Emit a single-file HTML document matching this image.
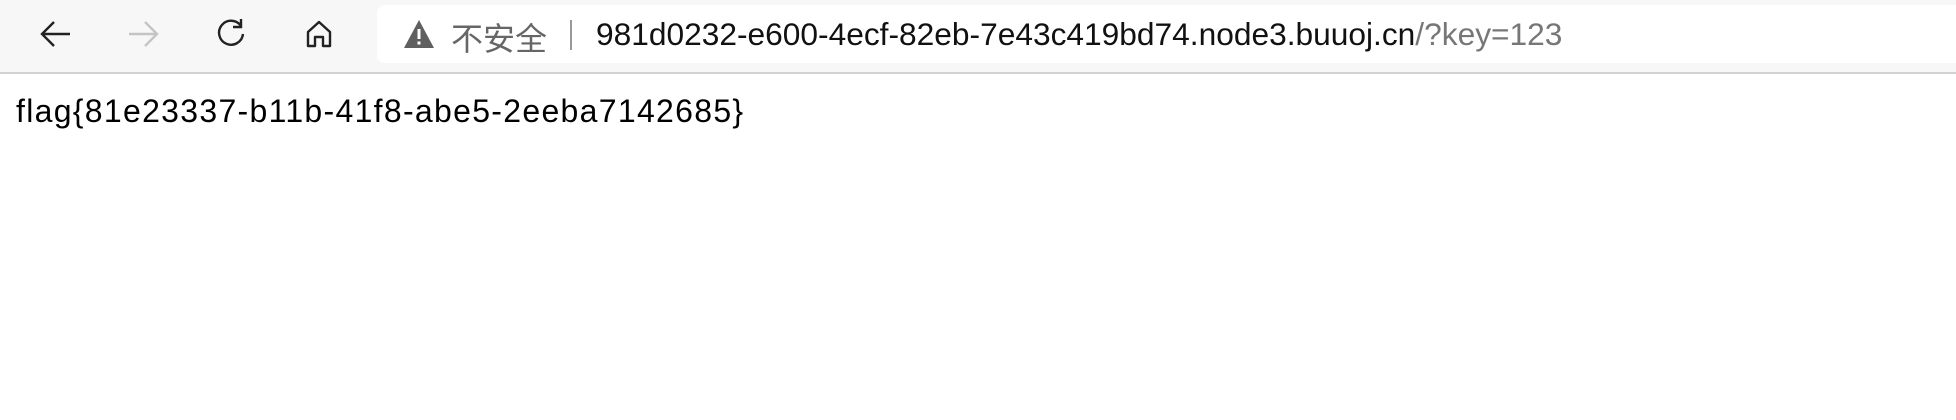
<!DOCTYPE html>
<html><head><meta charset="utf-8"><style>
html,body{margin:0;padding:0;width:1956px;height:420px;overflow:hidden;background:#fff;font-family:"Liberation Sans","Noto Sans CJK SC",sans-serif;}
.bar{position:absolute;left:0;top:0;width:1956px;height:72px;background:#f7f7f7;border-bottom:2px solid #d2d2d2;}
.addr{position:absolute;left:377px;top:5px;width:1579px;height:58px;background:#fff;border-radius:8px 0 0 8px;}
.ic{position:absolute;}
.t{position:absolute;white-space:nowrap;font-size:32px;}
</style></head><body>
<div class="bar">
<svg class="ic" style="left:36px;top:14px" width="40" height="40" viewBox="0 0 40 40"><path d="M34 20H6M18 8L6 20l12 12" fill="none" stroke="#222" stroke-width="2.4"/></svg>
<svg class="ic" style="left:123px;top:14px" width="40" height="40" viewBox="0 0 40 40"><path d="M6 20h28M22 8l12 12-12 12" fill="none" stroke="#c4c4c4" stroke-width="2.4"/></svg>
<svg class="ic" style="left:211px;top:14px" width="40" height="40" viewBox="0 0 40 40"><path d="M30 12A12 12 0 1 0 32 20" fill="none" stroke="#222" stroke-width="2.4"/><path d="M30 5v8h-8" fill="none" stroke="#222" stroke-width="2.4"/></svg>
<svg class="ic" style="left:299px;top:14px" width="40" height="40" viewBox="0 0 40 40"><path d="M9 18L20 8l11 10v14h-7v-9h-8v9H9z" fill="none" stroke="#222" stroke-width="2.4" stroke-linejoin="round"/></svg>
<div class="addr"></div>
<svg class="ic" style="left:403px;top:19px" width="32" height="30" viewBox="0 0 32 30"><path d="M16 1L31 29H1z" fill="#5f5f5f"/><rect x="14.5" y="10" width="3" height="10" fill="#fff"/><rect x="14.5" y="22.5" width="3" height="3" fill="#fff"/></svg>
<div class="t" style="left:451px;top:14px;color:#666">不安全</div>
<div style="position:absolute;left:570px;top:20px;width:2px;height:30px;background:#999"></div>
<div class="t" style="left:596px;top:16px;color:#111;font-size:31.7px">981d0232-e600-4ecf-82eb-7e43c419bd74.node3.buuoj.cn<span style="color:#777">/?key=123</span></div>
</div>
<div class="t" style="left:16px;top:93px;color:#000;letter-spacing:1.3px">flag{81e23337-b11b-41f8-abe5-2eeba7142685}</div>
</body></html>
